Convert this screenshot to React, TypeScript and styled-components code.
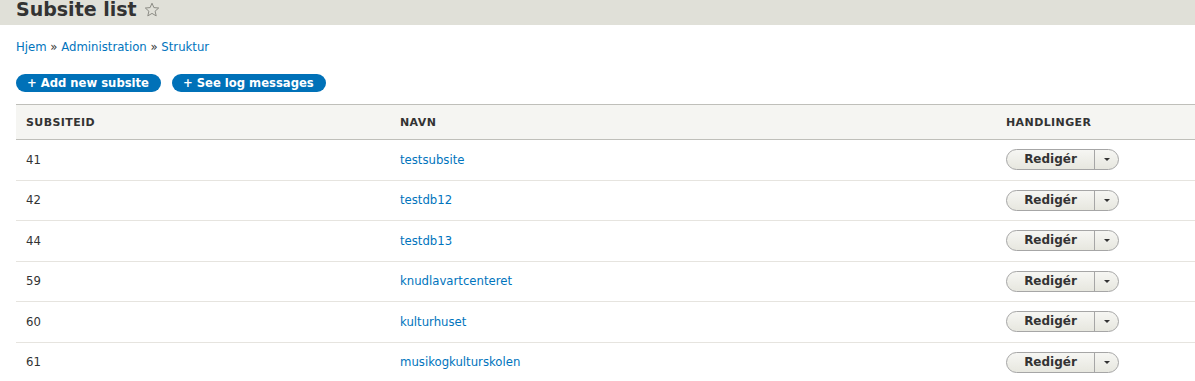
import React from 'react';
import styled, { createGlobalStyle } from 'styled-components';

const GlobalStyle = createGlobalStyle`
  html, body {
    margin: 0;
    padding: 0;
    background: #fff;
    overflow: hidden;
  }
  body {
    font-family: "DejaVu Sans", Verdana, sans-serif;
    color: #333;
    font-size: 11.7px;
  }
`;

const Header = styled.header`
  background: #e0e0d8;
  height: 25px;
  padding: 0 16px;
  display: flex;
  align-items: flex-end;
  overflow: hidden;
`;

const Title = styled.h1`
  margin: 0 0 6px;
  font-size: 19px;
  line-height: 20px;
  font-weight: bold;
  color: #333;
  display: flex;
  align-items: center;
  gap: 7px;
`;

const Star = styled.svg`
  width: 16px;
  height: 16px;
  margin-top: 1px;
`;

const Content = styled.main`
  padding: 14px 0 0 16px;
`;

const Breadcrumb = styled.nav`
  font-size: 11.7px;
  line-height: 16px;
  color: #333;
  margin-bottom: 19px;
`;

const Crumb = styled.a`
  color: #0074bd;
  text-decoration: none;
`;

const Actions = styled.div`
  display: flex;
  gap: 11px;
  margin-bottom: 12px;
`;

const ActionButton = styled.a`
  display: inline-block;
  background: #0071b8;
  color: #fff;
  font-weight: bold;
  font-size: 11.6px;
  line-height: 18px;
  height: 18px;
  padding: 0 12px 0 11px;
  border-radius: 10px;
  text-decoration: none;
  white-space: nowrap;
`;

const Table = styled.table`
  border-collapse: collapse;
  table-layout: fixed;
  width: 1240px;
  font-size: 11.7px;
`;

const Col = styled.col<{ $w: number }>`
  width: ${({ $w }) => $w}px;
`;

const HeadRow = styled.tr`
  background: #f5f5f2;
  border-top: 1px solid #bfbfba;
  border-bottom: 1px solid #bfbfba;
`;

const Th = styled.th`
  text-align: left;
  padding: 0 10px;
  height: 34px;
  font-size: 11px;
  font-weight: bold;
  text-transform: uppercase;
  color: #333;
  letter-spacing: 0.4px;
`;

const Row = styled.tr`
  border-bottom: 1px solid #e6e4df;
`;

const Td = styled.td`
  padding: 0 10px;
  height: 39.5px;
  color: #333;
`;

const NameLink = styled.a`
  color: #0074bd;
  text-decoration: none;
`;

const DropButton = styled.div`
  display: inline-flex;
  height: 19px;
  border: 1px solid #a6a6a6;
  border-radius: 11px;
  background: linear-gradient(#f6f6f3, #e7e7df);
  overflow: hidden;
  vertical-align: middle;
`;

const DropMain = styled.span`
  width: 87px;
  text-align: center;
  font-weight: bold;
  font-size: 12px;
  line-height: 19px;
  color: #333;
`;

const DropToggle = styled.span`
  width: 23px;
  border-left: 1px solid #a6a6a6;
  display: flex;
  align-items: center;
  justify-content: center;
  &::after {
    content: '';
    border-left: 3px solid transparent;
    border-right: 3px solid transparent;
    border-top: 3px solid #333;
  }
`;

const rows = [
  { id: 41, name: 'testsubsite' },
  { id: 42, name: 'testdb12' },
  { id: 44, name: 'testdb13' },
  { id: 59, name: 'knudlavartcenteret' },
  { id: 60, name: 'kulturhuset' },
  { id: 61, name: 'musikogkulturskolen' },
];

export default function App() {
  return (
    <>
      <GlobalStyle />
      <Header>
        <Title>
          Subsite list
          <Star viewBox="0 0 16 16">
            <path
              d="M8 1.2l1.9 4.4 4.8.4-3.6 3.2 1.1 4.7L8 11.4l-4.2 2.5 1.1-4.7L1.3 6l4.8-.4z"
              fill="none"
              stroke="#8c8c85"
              strokeWidth="1"
              strokeLinejoin="round"
            />
          </Star>
        </Title>
      </Header>
      <Content>
        <Breadcrumb>
          <Crumb href="#">Hjem</Crumb> » <Crumb href="#">Administration</Crumb> »{' '}
          <Crumb href="#">Struktur</Crumb>
        </Breadcrumb>
        <Actions>
          <ActionButton href="#">+ Add new subsite</ActionButton>
          <ActionButton href="#">+ See log messages</ActionButton>
        </Actions>
        <Table>
          <colgroup>
            <Col $w={374} />
            <Col $w={606} />
            <Col $w={260} />
          </colgroup>
          <thead>
            <HeadRow>
              <Th>Subsiteid</Th>
              <Th>Navn</Th>
              <Th>Handlinger</Th>
            </HeadRow>
          </thead>
          <tbody>
            {rows.map((r) => (
              <Row key={r.id}>
                <Td>{r.id}</Td>
                <Td>
                  <NameLink href="#">{r.name}</NameLink>
                </Td>
                <Td>
                  <DropButton>
                    <DropMain>Redigér</DropMain>
                    <DropToggle />
                  </DropButton>
                </Td>
              </Row>
            ))}
          </tbody>
        </Table>
      </Content>
    </>
  );
}
